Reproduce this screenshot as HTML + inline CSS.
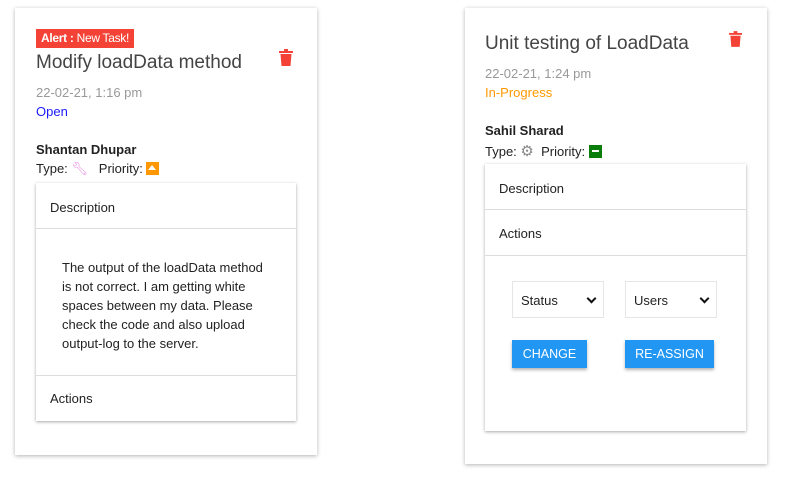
<!DOCTYPE html>
<html><head><style>
body{margin:0;width:786px;height:480px;background:#fff;font-family:"Liberation Sans",sans-serif;position:relative;overflow:hidden;color:#222}
.a{position:absolute;white-space:nowrap}
.card{position:absolute;background:#fff;box-shadow:0 1px 4px rgba(0,0,0,.3)}
.inner{position:absolute;background:#fff;box-shadow:0 1px 3px rgba(0,0,0,.35)}
.t{font-size:19px;font-weight:300;color:#444}
.s{font-size:13px}
.hr{position:absolute;left:0;right:0;height:1px;background:#ddd}
.sel{position:absolute;width:92px;height:37px;border:1px solid #e6e6e6;font-size:13px;box-sizing:border-box;padding:11px 8px}
.sel:after{content:"";position:absolute;right:8px;top:13px;width:5px;height:5px;border-right:2px solid #111;border-bottom:2px solid #111;transform:rotate(45deg)}
.btn{position:absolute;height:28px;background:#2196f3;color:#fff;font-size:12.5px;text-align:center;line-height:28px;box-shadow:0 2px 3px rgba(0,0,0,.3)}
</style></head><body>
<div class="card" style="left:15px;top:8px;width:302px;height:447px"></div>
<div class="card" style="left:465px;top:8px;width:302px;height:456px"></div>

<div class="a" style="left:36px;top:29px;width:98px;height:19px;background:#f44336;color:#fff;line-height:19px;text-align:center;font-size:12px;letter-spacing:-.3px"><b>Alert :</b> New Task!</div>
<div class="a t" style="left:36px;top:52px">Modify loadData method</div>
<svg class="a" style="left:279px;top:49px" width="14" height="17" viewBox="0 0 14 17"><rect x="0" y="2" width="14" height="2" fill="#f44336"/><rect x="5" y="0" width="4" height="3" fill="#f44336"/><path d="M1.5 5h11l-1 12h-9z" fill="#f44336"/></svg>
<div class="a s" style="left:36px;top:85px;color:#999">22-02-21, 1:16 pm</div>
<div class="a s" style="left:36px;top:104px;color:#1a1aff">Open</div>
<div class="a s" style="left:36px;top:142px;font-weight:bold">Shantan Dhupar</div>
<div class="a s" style="left:36px;top:161px">Type: <span style="color:#e88ae8">&#x1F527;&#xFE0E;</span> &nbsp;&nbsp;Priority: <span style="display:inline-block;width:13px;height:13px;background:#ff9800;vertical-align:-2px;position:relative"><span style="position:absolute;left:2px;top:3px;border:4.5px solid transparent;border-bottom:5px solid #fff;border-top:0"></span></span></div>
<div class="inner" style="left:36px;top:183px;width:260px;height:238px">
 <div class="a s" style="left:14px;top:17px">Description</div>
 <div class="hr" style="top:45px"></div>
 <div class="a s" style="left:26px;top:75px;line-height:19px;white-space:normal;width:206px">The output of the loadData method is not correct. I am getting white spaces between my data. Please check the code and also upload output-log to the server.</div>
 <div class="hr" style="top:192px"></div>
 <div class="a s" style="left:14px;top:208px">Actions</div>
</div>

<div class="a t" style="left:485px;top:33px">Unit testing of LoadData</div>
<svg class="a" style="left:729px;top:31px" width="13" height="16" viewBox="0 0 14 17"><rect x="0" y="2" width="14" height="2" fill="#f44336"/><rect x="5" y="0" width="4" height="3" fill="#f44336"/><path d="M1.5 5h11l-1 12h-9z" fill="#f44336"/></svg>
<div class="a s" style="left:485px;top:66px;color:#999">22-02-21, 1:24 pm</div>
<div class="a s" style="left:485px;top:85px;color:#ff9800">In-Progress</div>
<div class="a s" style="left:485px;top:123px;font-weight:bold">Sahil Sharad</div>
<div class="a s" style="left:485px;top:142px">Type: <span style="color:#888;font-size:15px">&#x2699;&#xFE0E;</span> &nbsp;Priority: <span style="display:inline-block;width:13px;height:13px;background:#0a7d0a;vertical-align:-2px;position:relative"><span style="position:absolute;left:3px;top:5px;width:7px;height:2px;background:#fff"></span></span></div>
<div class="inner" style="left:485px;top:164px;width:261px;height:267px">
 <div class="a s" style="left:14px;top:17px">Description</div>
 <div class="hr" style="top:45px"></div>
 <div class="a s" style="left:14px;top:62px">Actions</div>
 <div class="hr" style="top:91px"></div>
 <div class="sel" style="left:27px;top:117px">Status</div>
 <div class="sel" style="left:140px;top:117px">Users</div>
 <div class="btn" style="left:27px;top:176px;width:75px">CHANGE</div>
 <div class="btn" style="left:140px;top:176px;width:89px">RE-ASSIGN</div>
</div>
</body></html>
